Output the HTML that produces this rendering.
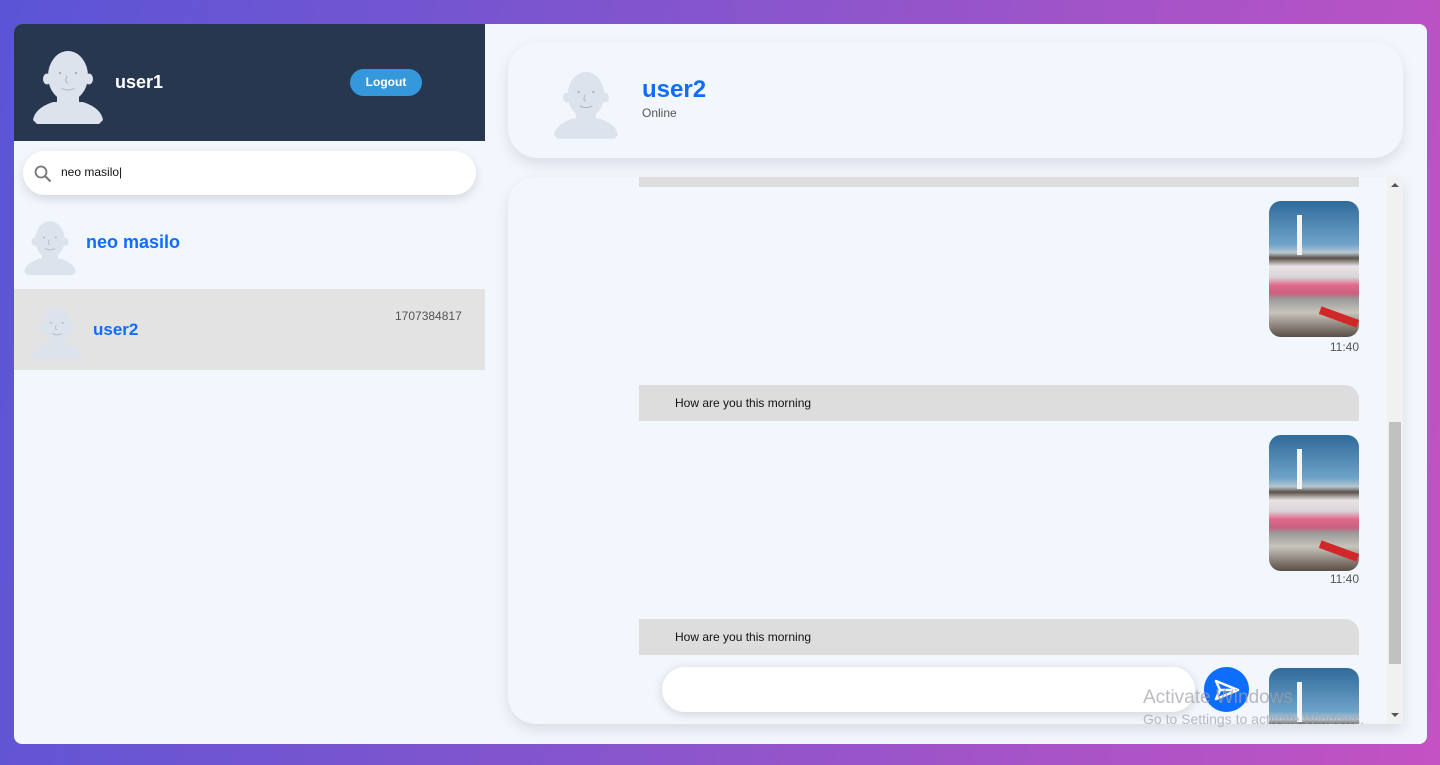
<!DOCTYPE html>
<html style="overflow:hidden"><head><meta charset="utf-8"><style>
*{box-sizing:border-box;margin:0;padding:0}
html,body{overflow:hidden}
body{width:1440px;height:765px;font-family:"Liberation Sans",Arial,sans-serif;background:linear-gradient(100deg,#5a55d6 0%,#8a55cc 50%,#c452c2 100%);position:relative}
.app{position:absolute;left:14px;top:24px;width:1413px;height:720px;background:#f2f6fd;border-radius:8px;overflow:hidden}
.side{position:absolute;left:0;top:0;width:471px;height:720px}
.sh{height:117px;background:#283750;position:relative}
.av{position:absolute}
.name1{position:absolute;left:101px;top:48px;color:#fff;font-weight:bold;font-size:18px}
.logout{position:absolute;left:336px;top:45px;width:72px;height:27px;border-radius:14px;background:#3498db;color:#fff;font-size:12px;font-weight:bold;text-align:center;line-height:27px}
.search{position:absolute;left:9px;top:127px;width:453px;height:44px;background:#fff;border-radius:22px;box-shadow:0 4px 10px rgba(0,0,0,.12)}
.search span{position:absolute;left:38px;top:14px;font-size:12px;color:#111}
.item{position:absolute;left:0;width:471px}
.blue{color:#0d6efd;font-weight:bold}
.card{position:absolute;left:494px;top:18px;width:895px;height:116px;border-radius:30px;background:#f2f6fd;box-shadow:0 6px 14px rgba(0,0,0,.1)}
.chat{position:absolute;left:494px;top:153px;width:895px;height:547px;border-radius:28px 0 0 28px;background:#f2f6fd;box-shadow:0 6px 14px rgba(0,0,0,.1);overflow:hidden}
.bub{position:absolute;left:131px;width:720px;height:36px;background:#dddddd;border-radius:0 14px 0 0;font-size:12px;color:#111;padding:11px 0 0 36px}
.img{position:absolute;left:761px;width:90px;height:136px;border-radius:12px;overflow:hidden;background:linear-gradient(180deg,#2f6a9a 0%,#6fa3c9 32%,#b8c6cf 38%,#5a5248 42%,#e8e4e4 48%,#d8d4d8 56%,#e06888 62%,#c86080 68%,#9a9a9a 72%,#c8c4bc 82%,#5a4e46 100%)}
.img:before{content:"";position:absolute;left:28px;top:14px;width:5px;height:40px;background:#f4f4f4}
.img:after{content:"";position:absolute;right:0;top:112px;width:40px;height:8px;background:#d02828;transform:rotate(20deg)}
.time{position:absolute;left:800px;width:51px;text-align:right;font-size:12px;color:#555}
.sb{position:absolute;right:0;top:0;width:16px;height:547px;background:#f1f1f1}
.thumb{position:absolute;left:2px;top:245px;width:12px;height:242px;background:#c1c1c1}
.input{position:absolute;left:154px;top:490px;width:533px;height:45px;border-radius:23px;background:#fff;box-shadow:0 2px 10px rgba(0,0,0,.15)}
.send{position:absolute;left:696px;top:490px;width:45px;height:45px;border-radius:50%;background:#0d6efd}
.wm{position:absolute;left:1143px;color:rgba(160,160,170,.7);white-space:nowrap}
</style></head><body>
<svg width="0" height="0" style="position:absolute"><defs><g id="av"><g fill="#dde3ed"><ellipse cx="35" cy="28" rx="20" ry="25"/><ellipse cx="14" cy="31" rx="4" ry="5.5"/><ellipse cx="56" cy="31" rx="4" ry="5.5"/><rect x="24" y="42" width="22" height="16"/><path d="M0 72 Q2 60 20 54 L50 54 Q68 60 70 72 L66 76 L4 76Z"/></g><g fill="none" stroke="#aab4c4" stroke-width="1"><path d="M34 28 q-3 6 1 7"/><path d="M28 40 q7 4 14 0"/></g><circle cx="27" cy="25" r="1.3" fill="#aab4c4"/><circle cx="43" cy="25" r="1.3" fill="#aab4c4"/></g></defs></svg>
<div class="app">
 <div class="side">
  <div class="sh">
   <svg class="av" style="left:18px;top:24px" width="72" height="76" viewBox="0 0 70 76"><use href="#av"/></svg>
   <div class="name1">user1</div>
   <div class="logout">Logout</div>
  </div>
  <div class="search"><svg style="position:absolute;left:11px;top:14px" width="18" height="18" viewBox="0 0 18 18"><circle cx="7" cy="7" r="5.5" fill="none" stroke="#777" stroke-width="1.8"/><path d="M11 11 L16.5 16.5" stroke="#777" stroke-width="2"/></svg><span>neo masilo|</span></div>
  <div class="item" style="top:192px;height:64px">
   <svg class="av" style="left:9px;top:3px" width="54" height="56" viewBox="0 0 70 76"><use href="#av"/></svg>
   <div class="blue" style="position:absolute;left:72px;top:16px;font-size:18px">neo masilo</div>
  </div>
  <div class="item" style="top:265px;height:81px;background:#e3e3e3">
   <svg class="av" style="left:18px;top:16px" width="50" height="54" viewBox="0 0 70 76"><use href="#av"/></svg>
   <div class="blue" style="position:absolute;left:79px;top:31px;font-size:17px">user2</div>
   <div style="position:absolute;left:381px;top:20px;font-size:12px;color:#555">1707384817</div>
  </div>
 </div>
 <div class="card">
  <svg class="av" style="left:46px;top:26px" width="64" height="72" viewBox="0 0 70 76"><use href="#av"/></svg>
  <div class="blue" style="position:absolute;left:134px;top:34px;font-size:24px">user2</div>
  <div style="position:absolute;left:134px;top:64px;font-size:12px;color:#555">Online</div>
 </div>
 <div class="chat">
  <div class="bub" style="top:-26px"></div>
  <div class="img" style="top:24px"></div>
  <div class="time" style="top:163px">11:40</div>
  <div class="bub" style="top:208px">How are you this morning</div>
  <div class="img" style="top:258px"></div>
  <div class="time" style="top:395px">11:40</div>
  <div class="bub" style="top:442px">How are you this morning</div>
  <div class="img" style="top:491px"></div>
  <div class="input"></div>
  <div class="send"><svg style="position:absolute;left:10px;top:12px" width="26" height="22" viewBox="0 0 26 22"><path d="M2 2 L24 11 L2 20 L6 11 Z M6 11 H24" fill="none" stroke="#fff" stroke-width="2.5" stroke-linejoin="round"/></svg></div>
  <div class="sb"><div class="thumb"></div><div style="position:absolute;left:4px;top:6px;border:4px solid transparent;border-bottom:4px solid #555;border-top:0"></div><div style="position:absolute;left:4px;top:536px;border:4px solid transparent;border-top:4px solid #555;border-bottom:0"></div></div>
 </div>
</div>
<div class="wm" style="top:687px;font-size:19px">Activate Windows</div>
<div class="wm" style="top:711px;font-size:14px">Go to Settings to activate Windows.</div>
</body></html>
